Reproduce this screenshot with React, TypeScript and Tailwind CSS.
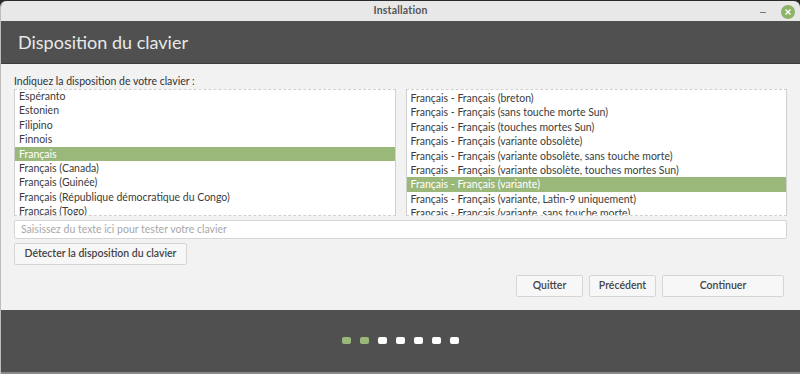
import React from "react";

const layouts = [
  "Espéranto",
  "Estonien",
  "Filipino",
  "Finnois",
  "Français",
  "Français (Canada)",
  "Français (Guinée)",
  "Français (République démocratique du Congo)",
  "Français (Togo)",
];

const variants = [
  "Français - Français (breton)",
  "Français - Français (sans touche morte Sun)",
  "Français - Français (touches mortes Sun)",
  "Français - Français (variante obsolète)",
  "Français - Français (variante obsolète, sans touche morte)",
  "Français - Français (variante obsolète, touches mortes Sun)",
  "Français - Français (variante)",
  "Français - Français (variante, Latin-9 uniquement)",
  "Français - Français (variante, sans touche morte)",
];

function ListBox({ items, selected, offset }: { items: string[]; selected: string; offset: string }) {
  return (
    <div className="flex-1 h-[127px] overflow-hidden bg-white border border-[#d0d0d0] [border-top-style:dashed] [border-bottom-style:dashed]">
      <div className={`flex flex-col ${offset}`}>
        {items.map((it) => (
          <div
            key={it}
            className={`h-[14.4px] leading-[14.4px] px-[4px] whitespace-nowrap ${
              it === selected ? "bg-[#9bb87b] text-white" : "text-[#3c3c3c]"
            }`}
          >
            {it}
          </div>
        ))}
      </div>
    </div>
  );
}

function Btn({ label, className }: { label: string; className: string }) {
  return (
    <button
      className={`h-[22px] border border-[#d6d6d6] rounded-[2px] bg-[#f7f7f7] text-[#444] font-semibold text-[10.5px] ${className}`}
    >
      {label}
    </button>
  );
}

export default function App() {
  return (
    <div
      className="w-[800px] h-[374px] bg-[#2a2a2a] flex flex-col overflow-hidden text-[10.5px]"
      style={{ fontFamily: "Lato, 'Noto Sans', sans-serif" }}
    >
      <div className="mt-[1px] flex-1 flex flex-col rounded-t-[6px] overflow-hidden border-l border-[#bdbdbd]">
        {/* title bar */}
        <div className="h-[20px] bg-[#e8e8e8] relative flex items-center justify-center">
          <span className="font-bold text-[#555] text-[10.5px] tracking-[0.2px]">Installation</span>
          <span className="absolute left-[759px] top-[11px] w-[6px] h-[1px] bg-[#777]" />
          <span className="absolute left-[780px] top-[4px] w-[14px] h-[14px] rounded-full bg-[#8db567] flex items-center justify-center">
            <svg width="6" height="6" viewBox="0 0 6 6">
              <path d="M0.5 0.5L5.5 5.5M5.5 0.5L0.5 5.5" stroke="#fff" strokeWidth="1.3" />
            </svg>
          </span>
        </div>
        {/* header */}
        <div className="h-[43px] bg-[#505050] flex items-center pl-[17px] border-b border-[#3e3e3e]">
          <span className="text-[#e8e8e8] text-[18px] leading-none">Disposition du clavier</span>
        </div>
        {/* content */}
        <div className="h-[246px] bg-[#f2f2f2] flex flex-col px-[13px] pt-[10px]">
          <div className="text-[#333] leading-[14px] mb-[1px]">Indiquez la disposition de votre clavier :</div>
          <div className="flex gap-[10px]">
            <ListBox items={layouts} selected="Français" offset="-mt-[1px]" />
            <ListBox items={variants} selected="Français - Français (variante)" offset="mt-[1px]" />
          </div>
          <div className="mt-[4px] h-[19px] bg-white border border-[#d6d6d6] rounded-[2px] flex items-center px-[6px] text-[#a8a8a8]">
            Saisissez du texte ici pour tester votre clavier
          </div>
          <div className="mt-[4px] flex">
            <Btn label="Détecter la disposition du clavier" className="w-[173px]" />
          </div>
          <div className="mt-[10px] flex justify-end gap-[6px] pr-[3px]">
            <Btn label="Quitter" className="w-[67px]" />
            <Btn label="Précédent" className="w-[67px]" />
            <Btn label="Continuer" className="w-[122px]" />
          </div>
        </div>
        {/* progress footer */}
        <div className="flex-1 bg-[#505050] flex items-center justify-center gap-[9px] pb-[2px]">
          {[0, 1, 2, 3, 4, 5, 6].map((i) => (
            <span
              key={i}
              className={`w-[9px] h-[7px] rounded-[2px] ${i < 2 ? "bg-[#9bb87b]" : "bg-white"}`}
            />
          ))}
        </div>
        <div className="h-[2px] bg-[#8a8a8a]" />
      </div>
    </div>
  );
}
